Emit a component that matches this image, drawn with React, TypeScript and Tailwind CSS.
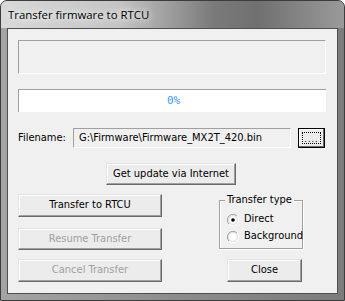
import React from "react";

const uiFont = { fontFamily: 'Tahoma, "DejaVu Sans Condensed", "Liberation Sans", sans-serif' };

function Btn({ label, disabled = false, className = "" }: { label: string; disabled?: boolean; className?: string }) {
  return (
    <div
      className={`flex items-center justify-center bg-[#ececec] border border-t-[#e3e3e3] border-l-[#e3e3e3] border-r-[#696969] border-b-[#696969] shadow-[inset_-1px_-1px_0_#a0a0a0,inset_1px_1px_0_#ffffff] text-[11px] ${
        disabled ? "text-[#a0a0a0]" : "text-black"
      } ${className}`}
    >
      {label}
    </div>
  );
}

function Radio({ checked }: { checked?: boolean }) {
  return (
    <svg width="12" height="12" viewBox="0 0 12 12" className="shrink-0">
      <path d="M10 2 A5.5 5.5 0 0 0 2 10" fill="none" stroke="#a0a0a0" strokeWidth="1" />
      <path d="M2 10 A5.5 5.5 0 0 0 10 2" fill="none" stroke="#ffffff" strokeWidth="1" />
      <circle cx="6" cy="6" r="4.3" fill="#ffffff" stroke="#d8d8d8" strokeWidth="0.8" />
      {checked && <circle cx="6" cy="6" r="1.8" fill="#000" />}
    </svg>
  );
}

export default function App() {
  return (
    <div className="w-[345px] h-[301px] flex flex-col border border-[#3c3c3c] rounded-t-[7px] overflow-hidden bg-[linear-gradient(90deg,#a4a4a4_0%,#8d8d8d_50%,#7c7c7c_100%)]">
      {/* title bar */}
      <div className="h-[27px] flex items-center pl-[7px] bg-[linear-gradient(90deg,#d9d9d9_0%,#c4c4c4_35%,#7a7a7a_62%,#707070_75%,#9a9a9a_100%)]">
        <span
          className="text-[11.4px] text-black pt-[1px] [text-shadow:0_0_8px_#f4f4f4,0_0_5px_#f4f4f4]"
          style={{ fontFamily: '"Segoe UI", "Open Sans", "Noto Sans", sans-serif' }}
        >
          Transfer firmware to RTCU
        </span>
      </div>

      {/* client area */}
      <div
        className="mx-[6px] h-[266px] border border-[#4e4e4e] bg-[#f0f0f0] px-[10px] pt-[11px] flex flex-col text-[11px] text-black"
        style={uiFont}
      >
        <div className="h-[34px] w-[308px] border-t border-l border-t-[#a0a0a0] border-l-[#a0a0a0] border-b border-r border-b-white border-r-white" />

        <div className="mt-[15px] h-[23px] w-[308px] bg-white border-t border-l border-t-[#a0a0a0] border-l-[#a0a0a0] flex items-center justify-center">
          <span className="text-[#3399ff] text-[11px] ml-[2px]" style={{ fontFamily: '"DejaVu Sans Mono", monospace' }}>0%</span>
        </div>

        <div className="mt-[16px] flex items-center h-[20px]">
          <span className="w-[55px]">Filename:</span>
          <div className="w-[218px] h-[20px] border border-t-[#a0a0a0] border-l-[#a0a0a0] border-b-white border-r-white bg-[#f0f0f0] flex items-center pl-[5px]">
            G:\Firmware\Firmware_MX2T_420.bin
          </div>
          <div className="ml-[7px] w-[27px] h-[20px] border border-black bg-[#ececec] shadow-[inset_-1px_-1px_0_#696969,inset_1px_1px_0_#ffffff] flex items-center justify-center">
            <div className="w-[19px] h-[12px] border border-dotted border-black flex items-end justify-center text-[9px] leading-[8px] tracking-[1px]">
              ....
            </div>
          </div>
        </div>

        <div className="mt-[15px] flex">
          <Btn label="Get update via Internet" className="ml-[88px] w-[130px] h-[22px]" />
        </div>

        <div className="mt-[9px] flex">
          <div className="flex flex-col w-[144px]">
            <Btn label="Transfer to RTCU" className="h-[23px]" />
            <Btn label="Resume Transfer" disabled className="mt-[11px] h-[22px]" />
            <Btn label="Cancel Transfer" disabled className="mt-[9px] h-[23px]" />
          </div>
          <div className="ml-[57px] flex flex-col">
            <div className="relative mt-[6px] w-[84px] h-[49px] border border-[#a0a0a0] shadow-[inset_1px_1px_0_#ffffff,1px_1px_0_#ffffff]">
              <span className="absolute -top-[8px] left-[5px] px-[2px] bg-[#f0f0f0] leading-[14px]">Transfer type</span>
              <div className="flex flex-col pl-[7px] pt-[12px] gap-[4px]">
                <div className="flex items-center gap-[5px] h-[13px]">
                  <Radio checked />
                  <span>Direct</span>
                </div>
                <div className="flex items-center gap-[5px] h-[13px]">
                  <Radio />
                  <span>Background</span>
                </div>
              </div>
            </div>
            <Btn label="Close" className="mt-[10px] ml-[8px] w-[75px] h-[23px]" />
          </div>
        </div>
      </div>
    </div>
  );
}
